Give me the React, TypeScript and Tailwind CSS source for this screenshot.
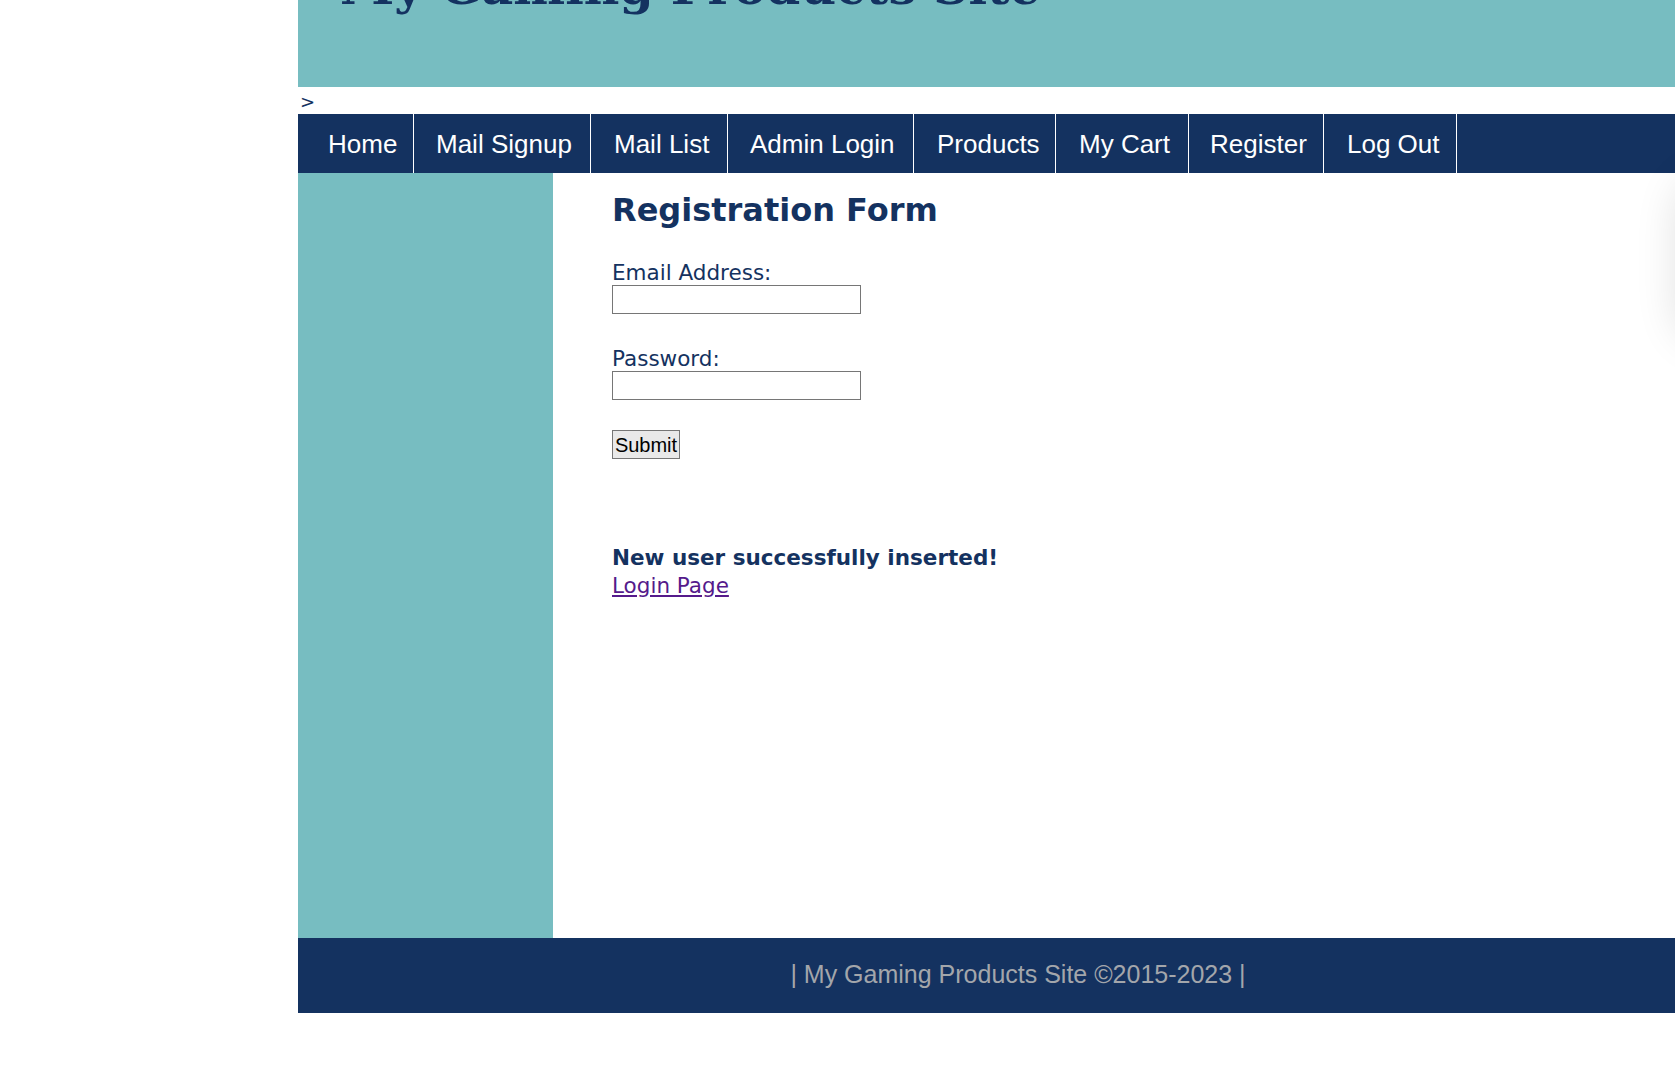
import React from "react";

const navItems = [
  { label: "Home", w: "w-[116px]", pl: "pl-[30px]" },
  { label: "Mail Signup", w: "w-[177px]", pl: "pl-[22px]" },
  { label: "Mail List", w: "w-[137px]", pl: "pl-[23px]" },
  { label: "Admin Login", w: "w-[186px]", pl: "pl-[22px]" },
  { label: "Products", w: "w-[142px]", pl: "pl-[23px]" },
  { label: "My Cart", w: "w-[133px]", pl: "pl-[23px]" },
  { label: "Register", w: "w-[135px]", pl: "pl-[21px]" },
  { label: "Log Out", w: "w-[133px]", pl: "pl-[23px]" },
];

export default function App() {
  return (
    <div className="relative min-h-screen w-full overflow-hidden bg-white">
      <div className="ml-[298px] w-[1440px]">
        {/* Header banner (page is scrolled, title cut off at top) */}
        <header className="h-[87px] overflow-hidden bg-[#77bdc1] pl-[42px]">
          <h1 className="mt-[-37px] whitespace-nowrap font-['DejaVu_Serif',Georgia,serif] text-[49px] font-bold leading-none text-[#143260]">
            My Gaming Products Site
          </h1>
        </header>

        <div className="h-[27px] pl-[2px] font-['DejaVu_Sans',Verdana,sans-serif] text-[18px] leading-[30px] text-[#143260]">
          &gt;
        </div>

        {/* Nav bar */}
        <nav className="flex h-[59px] bg-[#143260] font-['Liberation_Sans',Arial,sans-serif] text-[26px] leading-[61px] text-white">
          {navItems.map((item) => (
            <a
              key={item.label}
              href="#"
              className={`${item.w} ${item.pl} block overflow-hidden whitespace-nowrap border-r border-white`}
            >
              {item.label}
            </a>
          ))}
        </nav>

        {/* Body: sidebar + content */}
        <div className="flex h-[765px]">
          <aside className="w-[255px] shrink-0 bg-[#77bdc1]" />
          <main className="flex-1 pl-[59px] pt-[18px] font-['DejaVu_Sans',Verdana,sans-serif] text-[#143260]">
            <h2 className="text-[32px] font-bold leading-[38px]">Registration Form</h2>

            <form className="mt-[31px]">
              <label className="block text-[21.5px] leading-[25px]">Email Address:</label>
              <input
                type="text"
                className="block h-[29px] w-[249px] border border-[#767676] bg-white"
              />

              <label className="mt-[32px] block text-[21.5px] leading-[25px]">Password:</label>
              <input
                type="password"
                className="block h-[29px] w-[249px] border border-[#767676] bg-white"
              />

              <button
                type="button"
                className="mt-[30px] block h-[29px] w-[68px] border border-[#767676] bg-[#e9e9e9] font-['Liberation_Sans',Arial,sans-serif] text-[20px] leading-none text-black"
              >
                Submit
              </button>
            </form>

            <div className="mt-[85px] text-[21.5px] leading-[28px]">
              <p className="font-bold">New user successfully inserted!</p>
              <a href="#" className="text-[#551a8b] underline">
                Login Page
              </a>
            </div>
          </main>
        </div>

        {/* Footer */}
        <footer className="h-[75px] bg-[#143260] pt-[22px] text-center font-['Liberation_Sans',Arial,sans-serif] text-[25px] leading-[29px] text-[#a3a6ab]">
          | My Gaming Products Site ©2015-2023 |
        </footer>
      </div>

      {/* faint shadow of something off-screen on the right edge */}
      <div className="absolute left-[1680px] top-[180px] h-[160px] w-[80px] rounded-[30px] bg-white shadow-[0_0_45px_rgba(0,0,0,0.14)]" />
    </div>
  );
}
